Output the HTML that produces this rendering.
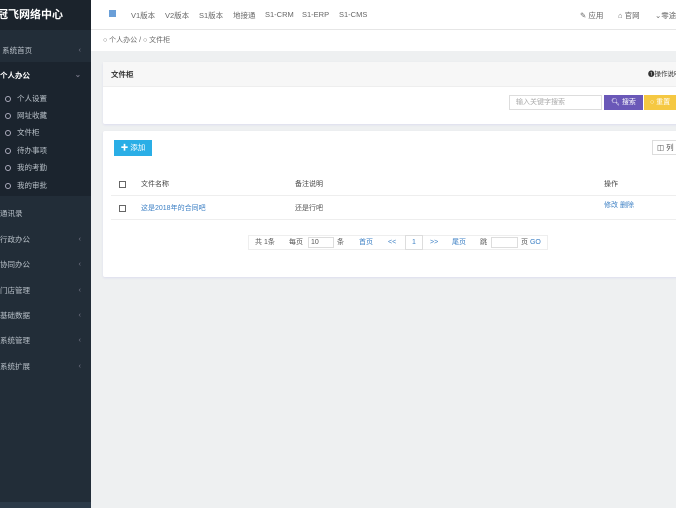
<!DOCTYPE html>
<html><head><meta charset="utf-8"><style>
*{margin:0;padding:0;box-sizing:border-box}
body{width:676px;height:508px;overflow:hidden;background:#eef0f1;font-family:"Liberation Sans","Noto Sans CJK SC",sans-serif;font-size:8px;color:#555;position:relative;white-space:nowrap}
.a{position:absolute}
#sb{left:0;top:0;width:91px;height:508px;background:#222d38}
#logo{left:-3px;top:0;width:94px;height:30px;background:#1b232c;color:#fff;font-size:11px;font-weight:bold;line-height:30px}
.mi{position:absolute;left:0;width:91px;color:#b8c0c8;font-size:7.5px}
.mi .c{position:absolute;right:10px;color:#778}
.sub{position:absolute;left:5px;color:#b8c0c8;font-size:7.5px}
.sub i{display:inline-block;width:6px;height:6px;border:1px solid #aab;border-radius:50%;margin-right:6px;vertical-align:-1px}
#top{left:91px;top:0;width:585px;height:30px;background:#fff;border-bottom:1px solid #e6e6e6;font-size:7.5px;color:#666}
#bc{left:91px;top:30px;width:585px;height:21px;background:#fff;font-size:7px;color:#666;line-height:21px;padding-left:12px}
.p{background:#fff;left:103px;width:580px;border-radius:2px;box-shadow:0 1px 2px #dde}
</style></head><body>
<div id="sb" class="a">
<div id="logo" class="a">冠飞网络中心</div>
<div class="mi" style="top:45px">&nbsp;系统首页<span class="c">‹</span></div>
<div class="a" style="top:62px;left:0;width:91px;height:134px;background:#1b242e"></div>
<div class="mi" style="top:70px;color:#fff;font-weight:bold">个人办公<span class="c">⌄</span></div>
<div class="sub" style="top:93px"><i></i>个人设置</div>
<div class="sub" style="top:110px"><i></i>网址收藏</div>
<div class="sub" style="top:127px"><i></i>文件柜</div>
<div class="sub" style="top:145px"><i></i>待办事项</div>
<div class="sub" style="top:162px"><i></i>我的考勤</div>
<div class="sub" style="top:180px"><i></i>我的审批</div>
<div class="mi" style="top:208px">通讯录</div>
<div class="mi" style="top:234px">行政办公<span class="c">‹</span></div>
<div class="mi" style="top:259px">协同办公<span class="c">‹</span></div>
<div class="mi" style="top:285px">门店管理<span class="c">‹</span></div>
<div class="mi" style="top:310px">基础数据<span class="c">‹</span></div>
<div class="mi" style="top:335px">系统管理<span class="c">‹</span></div>
<div class="mi" style="top:361px">系统扩展<span class="c">‹</span></div>
<div class="a" style="top:502px;left:0;width:91px;height:6px;background:#2c3a48"></div>
</div>
<div id="top" class="a">
<span class="a" style="left:18px;top:10px;width:7px;height:7px;background:#6a9fd8"></span>
<span class="a" style="left:40px;top:10px">V1版本</span>
<span class="a" style="left:74px;top:10px">V2版本</span>
<span class="a" style="left:108px;top:10px">S1版本</span>
<span class="a" style="left:142px;top:10px">地接通</span>
<span class="a" style="left:174px;top:10px">S1-CRM</span>
<span class="a" style="left:211px;top:10px">S1-ERP</span>
<span class="a" style="left:248px;top:10px">S1-CMS</span>
<span class="a" style="left:489px;top:10px">✎ 应用</span>
<span class="a" style="left:527px;top:10px">⌂ 官网</span>
<span class="a" style="left:564px;top:10px">⌄零途</span>
</div>
<div id="bc" class="a">○ 个人办公 / ○ 文件柜</div>
<div class="a p" style="top:62px;height:62px">
<div style="height:25px;background:#f7f7f7;border-bottom:1px solid #eee;font-weight:bold;color:#333;font-size:7.5px;line-height:25px;padding-left:8px">文件柜<span style="position:absolute;left:545px;font-weight:normal;font-size:6.5px">❶操作说明</span></div>
<div class="a" style="left:406px;top:33px;width:93px;height:15px;border:1px solid #ddd;color:#aaa;font-size:7px;line-height:13px;padding-left:6px">输入关键字搜索</div>
<div class="a" style="left:501px;top:33px;width:39px;height:15px;background:#6a58b8;color:#fff;font-size:7px;line-height:15px;text-align:center">🔍︎ 搜索</div>
<div class="a" style="left:541px;top:33px;width:40px;height:15px;background:#f5c842;color:#fff;font-size:7px;line-height:15px;padding-left:6px">○ 重置</div>
</div>
<div class="a p" style="top:131px;height:146px">
<div class="a" style="left:11px;top:9px;width:38px;height:16px;background:#2aaee6;color:#fff;font-size:7.5px;line-height:16px;text-align:center">✚ 添加</div>
<div class="a" style="left:549px;top:9px;width:30px;height:15px;border:1px solid #ddd;font-size:7.5px;line-height:13px;padding-left:4px">◫ 列</div>
<div class="a" style="left:8px;top:40px;width:570px;height:25px;border-bottom:1px solid #eee;font-size:7px;color:#444">
<span class="a" style="left:8px;top:10px;width:7px;height:7px;border:1px solid #666"></span>
<span class="a" style="left:30px;top:8px">文件名称</span><span class="a" style="left:184px;top:8px">备注说明</span><span class="a" style="left:493px;top:8px">操作</span></div>
<div class="a" style="left:8px;top:65px;width:570px;height:24px;border-bottom:1px solid #eee;font-size:7px">
<span class="a" style="left:8px;top:9px;width:7px;height:7px;border:1px solid #666"></span>
<span class="a" style="left:30px;top:7px;color:#3b7fc4">这是2018年的合同吧</span><span class="a" style="left:184px;top:7px">还是行吧</span><span class="a" style="left:493px;top:4px;color:#3b7fc4">修改 删除</span></div>
<div class="a" style="left:145px;top:104px;width:300px;height:15px;border:1px solid #eee;font-size:7px;line-height:13px;color:#555">
<span class="a" style="left:6px">共 1条</span><span class="a" style="left:40px">每页</span><span class="a" style="left:59px;top:1px;width:26px;height:11px;border:1px solid #ddd;line-height:9px;padding-left:2px">10</span><span class="a" style="left:88px">条</span><span class="a" style="left:110px;color:#3b7fc4">首页</span><span class="a" style="left:139px;color:#3b7fc4">&lt;&lt;</span><span class="a" style="left:156px;top:-1px;width:18px;height:15px;border:1px solid #ddd;text-align:center;color:#3b7fc4">1</span><span class="a" style="left:181px;color:#3b7fc4">&gt;&gt;</span><span class="a" style="left:203px;color:#3b7fc4">尾页</span><span class="a" style="left:231px">跳</span><span class="a" style="left:242px;top:1px;width:27px;height:11px;border:1px solid #ddd"></span><span class="a" style="left:272px">页 <span style="color:#3b7fc4">GO</span></span></div>
</div>
</body></html>
